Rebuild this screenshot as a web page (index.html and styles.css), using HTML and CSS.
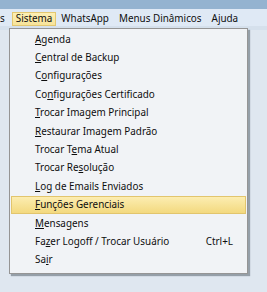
FILE: index.html
```html
<!DOCTYPE html>
<html lang="pt-BR">
<head>
    <meta charset="UTF-8">
    <title>Menu Sistema</title>
    <link rel="stylesheet" href="styles.css">
</head>
<body>
    <div class="titlebar"></div>

    <div class="menubar">
        <span class="menubar-item cut">s</span>
        <span class="menubar-item active">Sistema</span>
        <span class="menubar-item">WhatsApp</span>
        <span class="menubar-item">Menus Dinâmicos</span>
        <span class="menubar-item">Ajuda</span>
    </div>
    <div class="toolbar-strip"></div>

    <div class="dropdown">
        <div class="menu-item"><span><u>A</u>genda</span></div>
        <div class="menu-item"><span><u>C</u>entral de Backup</span></div>
        <div class="menu-item"><span>C<u>o</u>nfigurações</span></div>
        <div class="menu-item"><span>Co<u>n</u>figurações Certificado</span></div>
        <div class="menu-item"><span><u>T</u>rocar Imagem Principal</span></div>
        <div class="menu-item"><span><u>R</u>estaurar Imagem Padrão</span></div>
        <div class="menu-item"><span>Trocar T<u>e</u>ma Atual</span></div>
        <div class="menu-item"><span>Trocar Re<u>s</u>olução</span></div>
        <div class="menu-item"><span><u>L</u>og de Emails Enviados</span></div>
        <div class="menu-item selected"><span><u>F</u>unções Gerenciais</span></div>
        <div class="menu-item"><span><u>M</u>ensagens</span></div>
        <div class="menu-item"><span>Fa<u>z</u>er Logoff / Trocar Usuário</span><span class="shortcut">Ctrl+L</span></div>
        <div class="menu-item"><span>Sa<u>i</u>r</span></div>
    </div>
</body>
</html>
```

FILE: styles.css
```css
* {
    margin: 0;
    padding: 0;
    box-sizing: border-box;
}

body {
    font-family: 'Noto Sans', 'Open Sans', sans-serif;
    font-size: 9.9px;
    color: #0e0e0e;
    background: #dfe7f0;
    width: 267px;
    height: 292px;
    overflow: hidden;
    position: relative;
}

.titlebar {
    height: 9px;
    background: #94b3d0;
}

.menubar {
    height: 17px;
    padding-top: 3px;
    background: #dfe9f5;
    display: flex;
    white-space: nowrap;
}

.menubar-item {
    height: 14px;
    display: flex;
    align-items: center;
    padding: 0 4px 1px;
    border: 1px solid transparent;
    line-height: 1;
}

.menubar-item.cut {
    margin-left: -1px;
    padding: 0 6px 1px 0;
}

.menubar-item.active {
    padding: 0 3px 1px;
    background: linear-gradient(#fcefb4, #f7e39a);
    border-color: #e3c770;
}

.toolbar-strip {
    height: 4px;
    background: #d5e0ec;
}

.dropdown {
    position: absolute;
    left: 9px;
    top: 28px;
    width: 239px;
    padding: 1px 1px 4px;
    background: #f1f3f6;
    border: 1px solid #959595;
    box-shadow: 2px 2px 1px rgba(60, 70, 80, 0.45);
}

.menu-item {
    height: 18.4px;
    display: flex;
    align-items: center;
    justify-content: space-between;
    padding: 0 12px 1px 23px;
    border: 1px solid transparent;
    white-space: nowrap;
}

.menu-item u {
    text-underline-offset: 1px;
}

.menu-item.selected {
    background: linear-gradient(#fcedb1, #f3d97f);
    border-color: #e2c56d;
}
```
